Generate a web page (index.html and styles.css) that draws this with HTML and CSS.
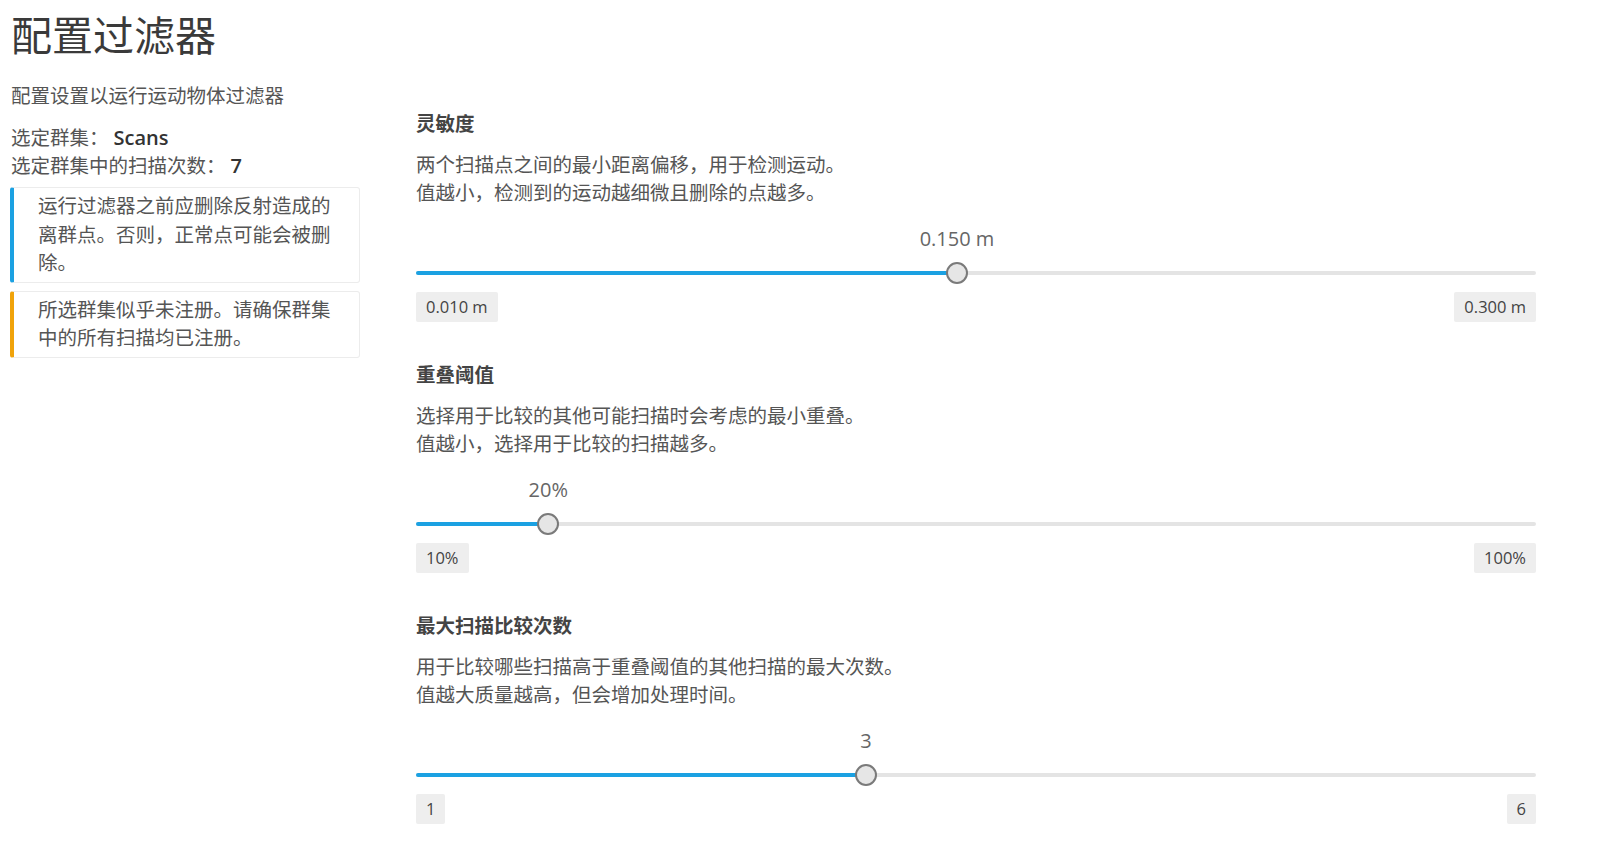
FILE: index.html
```html
<!DOCTYPE html>
<html lang="zh">
<head>
<meta charset="utf-8">
<title>配置过滤器</title>
<link rel="stylesheet" href="styles.css">
</head>
<body>
<div class="page">
  <aside class="side">
    <h1 class="title">配置过滤器</h1>
    <p class="subtitle">配置设置以运行运动物体过滤器</p>
    <div class="info">
      <div class="info-row">选定群集： <b>Scans</b></div>
      <div class="info-row">选定群集中的扫描次数： <b>7</b></div>
    </div>
    <div class="callout callout-info">运行过滤器之前应删除反射造成的离群点。否则，正常点可能会被删除。</div>
    <div class="callout callout-warn">所选群集似乎未注册。请确保群集中的所有扫描均已注册。</div>
  </aside>
  <main class="main">
    <section class="setting">
      <h2 class="setting-title">灵敏度</h2>
      <p class="setting-desc">两个扫描点之间的最小距离偏移，用于检测运动。<br>值越小，检测到的运动越细微且删除的点越多。</p>
      <div class="slider" style="--f:0.48276">
        <div class="slider-value"><span>0.150 m</span></div>
        <div class="track"><div class="fill"></div><div class="thumb"></div></div>
        <div class="range"><span class="range-label">0.010 m</span><span class="range-label">0.300 m</span></div>
      </div>
    </section>
    <section class="setting">
      <h2 class="setting-title">重叠阈值</h2>
      <p class="setting-desc">选择用于比较的其他可能扫描时会考虑的最小重叠。<br>值越小，选择用于比较的扫描越多。</p>
      <div class="slider" style="--f:0.11111">
        <div class="slider-value"><span>20%</span></div>
        <div class="track"><div class="fill"></div><div class="thumb"></div></div>
        <div class="range"><span class="range-label">10%</span><span class="range-label">100%</span></div>
      </div>
    </section>
    <section class="setting">
      <h2 class="setting-title">最大扫描比较次数</h2>
      <p class="setting-desc">用于比较哪些扫描高于重叠阈值的其他扫描的最大次数。<br>值越大质量越高，但会增加处理时间。</p>
      <div class="slider" style="--f:0.4">
        <div class="slider-value"><span>3</span></div>
        <div class="track"><div class="fill"></div><div class="thumb"></div></div>
        <div class="range"><span class="range-label">1</span><span class="range-label">6</span></div>
      </div>
    </section>
  </main>
</div>
</body>
</html>
```
FILE: styles.css
```css
* { box-sizing: border-box; }
html, body { margin: 0; padding: 0; background: #fff; }
body {
  font-family: "Open Sans", "Noto Sans CJK SC", sans-serif;
  color: #555;
  font-size: 20px;
}
.page {
  display: flex;
  gap: 56px;
  padding: 0 64px 0 10px;
}
.side {
  width: 350px;
  flex: none;
}
.title {
  margin: 0;
  padding-top: 10px;
  font-size: 41px;
  line-height: 50px;
  font-weight: 400;
  color: #3a3a3a;
  padding-left: 1px;
}
.subtitle {
  margin: 22px 0 0;
  line-height: 28px;
  font-size: 19.5px;
  padding-left: 1px;
}
.info {
  margin-top: 14px;
  padding-left: 1px;
}
.info-row {
  line-height: 28px;
  font-size: 19.5px;
}
.info-row b {
  font-weight: 600;
  font-size: 20px;
  color: #333;
}
.callout {
  margin-top: 7px;
  border: 1px solid #ececec;
  border-left: 4px solid #1ba1e2;
  border-radius: 3px;
  padding: 4px 20px 4px 24px;
  line-height: 28.5px;
  font-size: 19.5px;
  color: #555;
}
.callout-warn {
  margin-top: 8px;
  border-left-color: #f0a30a;
}
.main {
  flex: 1;
  padding-top: 110px;
}
.setting + .setting {
  margin-top: 39px;
}
.setting-title {
  margin: 0;
  font-size: 19.5px;
  line-height: 28px;
  font-weight: 700;
  color: #444;
}
.setting-desc {
  margin: 13px 0 0;
  font-size: 19.5px;
  line-height: 28px;
  color: #555;
}
.slider {
  margin-top: 20px;
}
.slider-value {
  position: relative;
  height: 24px;
  margin: 0 10px;
}
.slider-value span {
  position: absolute;
  left: calc(var(--f) * 100%);
  transform: translateX(-50%);
  font-size: 20px;
  line-height: 24px;
  color: #666;
  white-space: nowrap;
}
.track {
  position: relative;
  margin-top: 10px;
  height: 24px;
}
.track::before {
  content: "";
  position: absolute;
  left: 0;
  right: 0;
  top: 10px;
  height: 4px;
  border-radius: 2px;
  background: #e4e4e4;
}
.fill {
  position: absolute;
  left: 0;
  top: 10px;
  height: 4px;
  border-radius: 2px;
  width: calc(10px + var(--f) * (100% - 20px));
  background: #1ba1e2;
}
.thumb {
  position: absolute;
  top: 1px;
  left: calc(10px + var(--f) * (100% - 20px));
  width: 22px;
  height: 22px;
  margin-left: -11px;
  border-radius: 50%;
  background: #e6e6e6;
  border: 2.5px solid #7a7a7a;
}
.range {
  display: flex;
  justify-content: space-between;
  margin-top: 7px;
}
.range-label {
  background: #eeeeee;
  border-radius: 2px;
  padding: 4px 10px;
  font-size: 16.5px;
  line-height: 22px;
  color: #444;
}
```
